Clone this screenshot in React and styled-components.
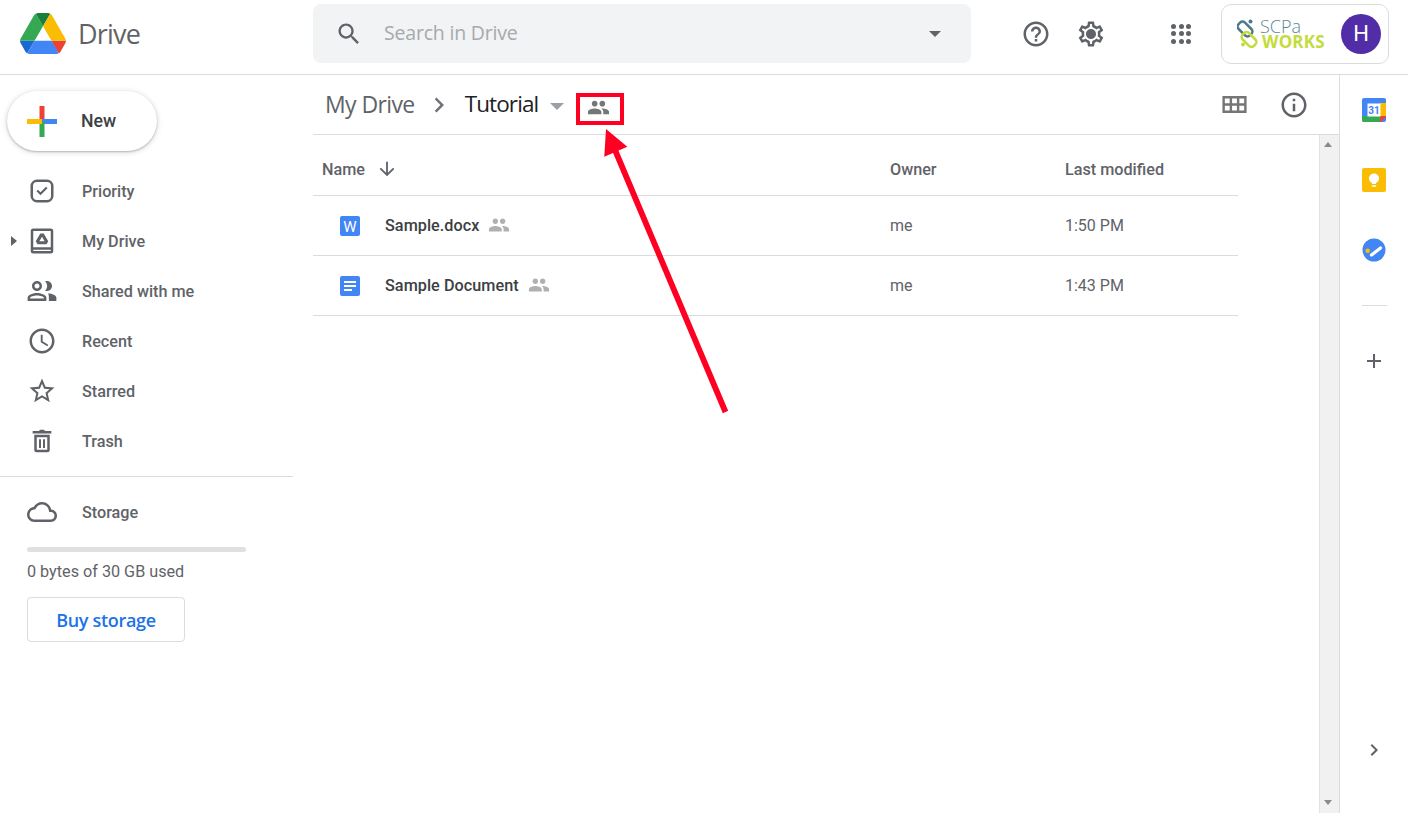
import React from "react";
import styled, { createGlobalStyle } from "styled-components";

const GlobalStyle = createGlobalStyle`
  html, body {
    margin: 0;
    height: 100%;
    background: #fff;
    font-family: Roboto, "Liberation Sans", sans-serif;
    color: #5f6368;
    overflow: hidden;
  }
`;

const paths = {
  search:
    "M15.5 14h-.79l-.28-.27C15.41 12.59 16 11.11 16 9.5 16 5.91 13.09 3 9.5 3S3 5.91 3 9.5 5.91 16 9.5 16c1.61 0 3.09-.59 4.23-1.57l.27.28v.79l5 4.99L20.49 19l-4.99-5zm-6 0C7.01 14 5 11.99 5 9.5S7.01 5 9.5 5 14 7.01 14 9.5 11.99 14 9.5 14z",
  help:
    "M11 18h2v-2h-2v2zm1-16C6.48 2 2 6.48 2 12s4.48 10 10 10 10-4.48 10-10S17.52 2 12 2zm0 18c-4.41 0-8-3.59-8-8s3.59-8 8-8 8 3.59 8 8-3.59 8-8 8zm0-14c-2.21 0-4 1.79-4 4h2c0-1.1.9-2 2-2s2 .9 2 2c0 2-3 1.75-3 5h2c0-2.25 3-2.5 3-5 0-2.21-1.79-4-4-4z",
  settings:
    "M19.43 12.98c.04-.32.07-.64.07-.98 0-.34-.03-.66-.07-.98l2.11-1.65c.19-.15.24-.42.12-.64l-2-3.46c-.09-.16-.26-.25-.44-.25-.06 0-.12.01-.17.03l-2.49 1c-.52-.4-1.08-.73-1.69-.98l-.38-2.65C14.46 2.18 14.25 2 14 2h-4c-.25 0-.46.18-.49.42l-.38 2.65c-.61.25-1.17.59-1.69.98l-2.49-1c-.06-.02-.12-.03-.18-.03-.17 0-.34.09-.43.25l-2 3.46c-.13.22-.07.49.12.64l2.11 1.65c-.04.32-.07.65-.07.98 0 .33.03.66.07.98l-2.11 1.65c-.19.15-.24.42-.12.64l2 3.46c.09.16.26.25.44.25.06 0 .12-.01.17-.03l2.49-1c.52.4 1.08.73 1.69.98l.38 2.65c.03.24.24.42.49.42h4c.25 0 .46-.18.49-.42l.38-2.65c.61-.25 1.17-.59 1.69-.98l2.49 1c.06.02.12.03.18.03.17 0 .34-.09.43-.25l2-3.46c.12-.22.07-.49-.12-.64l-2.11-1.65zm-1.98-1.71c.04.31.05.52.05.73 0 .21-.02.43-.05.73l-.14 1.13.89.7 1.08.84-.7 1.21-1.27-.51-1.04-.42-.9.68c-.43.32-.84.56-1.25.73l-1.06.43-.16 1.13-.2 1.35h-1.4l-.19-1.35-.16-1.13-1.06-.43c-.43-.18-.83-.41-1.23-.71l-.91-.7-1.06.43-1.27.51-.7-1.21 1.08-.84.89-.7-.14-1.13c-.03-.31-.05-.54-.05-.74s.02-.43.05-.73l.14-1.13-.89-.7-1.08-.84.7-1.21 1.27.51 1.04.42.9-.68c.43-.32.84-.56 1.25-.73l1.06-.43.16-1.13.2-1.35h1.39l.19 1.35.16 1.13 1.06.43c.43.18.83.41 1.23.71l.91.7 1.06-.43 1.27-.51.7 1.21-1.07.85-.89.7.14 1.13zM12 8c-2.21 0-4 1.79-4 4s1.79 4 4 4 4-1.79 4-4-1.79-4-4-4z",
  people:
    "M16 11c1.66 0 2.99-1.34 2.99-3S17.66 5 16 5c-1.66 0-3 1.34-3 3s1.34 3 3 3zm-8 0c1.66 0 2.99-1.34 2.99-3S9.66 5 8 5C6.34 5 5 6.34 5 8s1.34 3 3 3zm0 2c-2.33 0-7 1.17-7 3.5V19h14v-2.5c0-2.33-4.67-3.5-7-3.5zm8 0c-.29 0-.62.02-.97.05 1.16.84 1.97 1.97 1.97 3.45V19h6v-2.5c0-2.33-4.67-3.5-7-3.5z",
  shared:
    "M8 4c2.200 0 4 1.800 4 4s-1.800 4-4 4-4-1.800-4-4 1.800-4 4-4zm0 2c-1.100 0-2 .9-2 2s.9 2 2 2 2-.9 2-2-.9-2-2-2zM8 13.500c2.600 0 7.500 1.200 7.500 3.800V20H.5v-2.700c0-2.600 4.900-3.800 7.500-3.800zm0 2c-2.600 0-5.500 1-5.500 1.800V18h11v-.7c0-.8-2.900-1.800-5.500-1.800zM14.500 4.200c.5-.1 1-.2 1.500-.2 2.200 0 4 1.800 4 4s-1.800 4-4 4c-.5 0-1-.1-1.500-.2 1-1 1.600-2.400 1.600-3.800s-.6-2.800-1.600-3.800zM17 13.700c2.900.4 6.500 1.500 6.500 3.600V20h-6v-2.700c0-1.500-.3-2.600-.5-3.600z",
  clock:
    "M11.99 2C6.47 2 2 6.48 2 12s4.47 10 9.99 10C17.52 22 22 17.52 22 12S17.52 2 11.99 2zM12 20c-4.42 0-8-3.58-8-8s3.58-8 8-8 8 3.58 8 8-3.58 8-8 8zm.5-13H11v6l5.25 3.15.75-1.23-4.5-2.67z",
  star:
    "M22 9.24l-7.19-.62L12 2 9.19 8.63 2 9.24l5.46 4.73L5.82 21 12 17.27 18.18 21l-1.63-7.03L22 9.24zM12 15.4l-3.76 2.27 1-4.28-3.32-2.88 4.38-.38L12 6.1l1.71 4.04 4.38.38-3.32 2.88 1 4.28L12 15.4z",
  trash:
    "M4.500 4h5l1-1h3l1 1h5v2h-15zM5.800 7h12.400v12a2 2 0 0 1-2 2H7.800a2 2 0 0 1-2-2V7zm2 2v10h8.400V9H7.800zM9.600 10.500h1.600v7H9.600zM12.800 10.500h1.600v7h-1.600z",
  cloud:
    "M19.35 10.04C18.67 6.59 15.64 4 12 4 9.11 4 6.6 5.64 5.35 8.04 2.34 8.36 0 10.91 0 14c0 3.31 2.69 6 6 6h13c2.76 0 5-2.24 5-5 0-2.64-2.05-4.78-4.65-4.96zM19 18H6c-2.21 0-4-1.79-4-4 0-2.05 1.53-3.76 3.56-3.97l1.07-.11.5-.95C8.08 7.14 9.94 6 12 6c2.62 0 4.88 1.86 5.39 4.43l.3 1.5 1.53.11c1.56.1 2.78 1.41 2.78 2.96 0 1.65-1.35 3-3 3z",
  info:
    "M11 7h2v2h-2zm0 4h2v6h-2zm1-9C6.48 2 2 6.48 2 12s4.48 10 10 10 10-4.48 10-10S17.52 2 12 2zm0 18c-4.41 0-8-3.59-8-8s3.59-8 8-8 8 3.59 8 8-3.59 8-8 8z",
  arrowDown:
    "M20 12l-1.41-1.41L13 16.17V4h-2v12.17l-5.58-5.59L4 12l8 8 8-8z",
  chevron: "M8.59 16.59L13.17 12 8.59 7.41 10 6l6 6-6 6z",
  plus: "M19 13h-6v6h-2v-6H5v-2h6V5h2v6h6v2z",
  grid:
    "M2 5h20v14H2V5zm2 2v4h4V7H4zm6 0v4h4V7h-4zm6 0v4h4V7h-4zM4 13v4h4v-4H4zm6 0v4h4v-4h-4zm6 0v4h4v-4h-4z",
  priority:
    "M8 2.800h8a5.200 5.200 0 0 1 5.200 5.200v8a5.200 5.200 0 0 1-5.200 5.200H8A5.200 5.200 0 0 1 2.800 16V8A5.200 5.200 0 0 1 8 2.800zM8 4.800A3.200 3.200 0 0 0 4.800 8v8A3.200 3.200 0 0 0 8 19.200h8a3.200 3.200 0 0 0 3.200-3.200V8A3.200 3.200 0 0 0 16 4.800H8zM15.200 8.600l1.200 1.200-5.600 5.600-3.200-3.200 1.200-1.200 2 2 4.400-4.400z",
  myDrive:
    "M5 2h14a2 2 0 0 1 2 2v16a2 2 0 0 1-2 2H5a2 2 0 0 1-2-2V4a2 2 0 0 1 2-2zm0 2v13h14V4H5zm0 15v1h14v-1H5zM10.600 6h2.800l3.600 6.200-1.400 2.300H8.400L7 12.200 10.600 6zm1.400 2.500L9.900 12.200h4.200L12 8.500z",
};

const Svg = styled.svg`
  display: block;
  flex: none;
  width: ${(p) => p.$size}px;
  height: ${(p) => p.$size}px;
  fill: ${(p) => p.$color};
`;

const Icon = ({ name, size = 24, color = "#5f6368" }) => (
  <Svg viewBox="0 0 24 24" $size={size} $color={color}>
    <path fillRule="evenodd" d={paths[name]} />
  </Svg>
);

const DriveLogo = () => (
  <svg width="46" height="41" viewBox="0 0 87.3 78">
    <path d="m6.6 66.85 3.85 6.65c.8 1.4 1.95 2.5 3.3 3.3l13.75-23.8h-27.5c0 1.55.4 3.1 1.2 4.5z" fill="#1967d2" />
    <path d="m43.65 25-13.75-23.8c-1.35.8-2.5 1.9-3.3 3.3l-25.4 44a9.06 9.06 0 0 0 -1.2 4.5h27.5z" fill="#34a853" />
    <path d="m73.55 76.8c1.35-.8 2.5-1.9 3.3-3.3l1.6-2.75 7.65-13.25c.8-1.4 1.2-2.95 1.2-4.5h-27.502l5.852 11.5z" fill="#ea4335" />
    <path d="m43.65 25 13.75-23.8c-1.35-.8-2.9-1.2-4.5-1.2h-18.5c-1.6 0-3.15.45-4.5 1.2z" fill="#188038" />
    <path d="m59.8 53h-32.3l-13.75 23.8c1.35.8 2.9 1.2 4.5 1.2h50.8c1.6 0 3.15-.45 4.5-1.2z" fill="#4285f4" />
    <path d="m73.4 26.5-12.7-22c-.8-1.4-1.95-2.5-3.3-3.3l-13.75 23.8 16.15 28h27.45c0-1.55-.4-3.1-1.2-4.5z" fill="#fbbc04" />
  </svg>
);

const PlusLogo = () => (
  <svg width="30" height="31" viewBox="0 0 30 31">
    <rect x="12.500" y="0" width="5" height="15.500" fill="#ea4335" />
    <rect x="15" y="13" width="15" height="5" fill="#4285f4" />
    <rect x="12.500" y="15.500" width="5" height="15.500" fill="#34a853" />
    <rect x="0" y="13" width="15" height="5" fill="#fbbc04" />
  </svg>
);

const WordIcon = () => (
  <svg width="20" height="20" viewBox="0 0 20 20">
    <rect width="20" height="20" rx="2" fill="#4285f4" />
    <text x="10" y="15.500" textAnchor="middle" fontFamily="Roboto, sans-serif" fontSize="15" fill="#fff">
      W
    </text>
  </svg>
);

const DocIcon = () => (
  <svg width="20" height="20" viewBox="0 0 20 20">
    <rect width="20" height="20" rx="2" fill="#4285f4" />
    <path d="M4 5h12v2H4zM4 9h12v2H4zM4 13h8v2H4z" fill="#fff" />
  </svg>
);

const CalendarIcon = () => (
  <svg width="24" height="24" viewBox="0 0 24 24">
    <rect width="24" height="24" rx="2" fill="#4285f4" />
    <path d="M18 5h6v14h-6z" fill="#fbbc04" />
    <path d="M0 18h18v6H2a2 2 0 0 1-2-2z" fill="#34a853" />
    <path d="M18 18h6v1l-5 5h-1z" fill="#ea4335" />
    <rect x="5.500" y="5.500" width="13" height="13" fill="#fff" />
    <text x="12" y="16" textAnchor="middle" fontFamily="Roboto, sans-serif" fontWeight="700" fontSize="10" fill="#4285f4">
      31
    </text>
  </svg>
);

const KeepIcon = () => (
  <svg width="24" height="24" viewBox="0 0 24 24">
    <rect width="24" height="24" rx="2" fill="#fbbc04" />
    <circle cx="12" cy="10.500" r="5" fill="#fff" />
    <path d="M10 13h4v3h-4zM9.800 17.200h4.400v1.600H9.800z" fill="#fff" />
  </svg>
);

const TasksIcon = () => (
  <svg width="24" height="24" viewBox="0 0 24 24">
    <circle cx="12" cy="12" r="11.500" fill="#4285f4" />
    <circle cx="5.700" cy="12.700" r="2.300" fill="#fbbc04" />
    <path d="M9.500 17L18.500 10" stroke="#fff" strokeWidth="3.200" strokeLinecap="round" />
  </svg>
);

const ScpaMark = () => (
  <svg width="21" height="29" viewBox="0 0 21 29" fill="none">
    <rect x="3.500" y="2" width="9" height="16" rx="3.500" transform="rotate(-45 8 10)" stroke="#4d7a8c" strokeWidth="2.500" />
    <rect x="7.500" y="12.500" width="9" height="16" rx="3.500" transform="rotate(-45 12 20.500)" stroke="#c3dc3c" strokeWidth="2.500" />
    <circle cx="13.500" cy="2.500" r="2" fill="#4d7a8c" />
    <circle cx="6" cy="25.500" r="2" fill="#c3dc3c" />
  </svg>
);

const Page = styled.div`
  position: relative;
  display: flex;
  flex-direction: column;
  height: 813px;
  overflow: hidden;
`;

const Header = styled.header`
  flex: none;
  height: 74px;
  display: flex;
  align-items: center;
  border-bottom: 1px solid #dadce0;
`;

const Brand = styled.div`
  width: 313px;
  flex: none;
  display: flex;
  align-items: center;
  gap: 12px;
  padding-left: 20px;
  box-sizing: border-box;
  margin-top: -7px;
`;

const BrandName = styled.span`
  font-family: "Open Sans", sans-serif;
  font-size: 27px;
  letter-spacing: -0.8px;
  color: #5f6368;
`;

const Search = styled.div`
  width: 658px;
  height: 59px;
  flex: none;
  margin-top: -7px;
  display: flex;
  align-items: center;
  padding: 0 30px 0 22px;
  box-sizing: border-box;
  background: #f1f3f4;
  border-radius: 8px;
`;

const SearchText = styled.span`
  flex: 1;
  margin: 0 0 2px 21px;
  font-family: "Open Sans", sans-serif;
  font-size: 19.500px;
  letter-spacing: -0.2px;
  color: #a6a9ad;
`;

const SmallCaret = styled.span`
  width: 0;
  height: 0;
  border-left: ${(p) => p.$size}px solid transparent;
  border-right: ${(p) => p.$size}px solid transparent;
  border-top: ${(p) => p.$size}px solid ${(p) => p.$color};
`;

const HeaderTools = styled.div`
  display: flex;
  align-items: center;
  margin-top: -7px;
  padding-left: 50px;
`;

const ToolSlot = styled.div`
  width: ${(p) => p.$width}px;
  display: flex;
  margin-top: 1px;
`;

const Dots = styled.div`
  display: grid;
  grid-template-columns: repeat(3, 5px);
  gap: 2.500px;
`;

const Dot = styled.span`
  width: 5px;
  height: 5px;
  border-radius: 50%;
  background: #5f6368;
`;

const Account = styled.div`
  width: 168px;
  height: 60px;
  margin-left: 30px;
  display: flex;
  align-items: center;
  box-sizing: border-box;
  padding: 0 7px 0 15px;
  border: 1px solid #dadce0;
  border-radius: 10px;
`;

const OrgLogo = styled.div`
  flex: 1;
  display: flex;
  align-items: center;
`;

const OrgText = styled.div`
  display: flex;
  flex-direction: column;
  margin-left: 2px;
  line-height: 15px;
`;

const OrgTop = styled.span`
  font-family: "Open Sans", sans-serif;
  font-size: 18px;
  font-weight: 300;
  color: #5c8797;
`;

const OrgBottom = styled.span`
  padding-left: 2px;
  font-family: "Open Sans", sans-serif;
  font-size: 17px;
  font-weight: 700;
  letter-spacing: 0.2px;
  color: #c3dc3c;
`;

const Avatar = styled.div`
  width: 40px;
  height: 40px;
  border-radius: 50%;
  background: #512da8;
  color: #fff;
  font-size: 22px;
  display: flex;
  align-items: center;
  justify-content: center;
`;

const Body = styled.div`
  flex: 1;
  min-height: 0;
  display: flex;
`;

const Sidebar = styled.aside`
  width: 293px;
  flex: none;
  margin-right: 20px;
`;

const NewButton = styled.div`
  width: 150px;
  height: 60px;
  margin: 16px 0 15px 7px;
  box-sizing: border-box;
  padding-left: 20px;
  display: flex;
  align-items: center;
  gap: 24px;
  border-radius: 30px;
  background: #fff;
  box-shadow: 0 1px 2px rgba(60, 64, 67, 0.3), 0 1px 5px 1px rgba(60, 64, 67, 0.15);
  font-size: 17.700px;
  font-weight: 500;
  color: #3c4043;
`;

const NavList = styled.nav`
  display: flex;
  flex-direction: column;
`;

const NavItem = styled.div`
  height: 50px;
  display: flex;
  align-items: center;
  font-size: 16.200px;
  font-weight: 500;
  color: #5f6368;
`;

const CaretSlot = styled.div`
  width: 27px;
  flex: none;
  display: flex;
  padding-left: 11px;
  box-sizing: border-box;
`;

const RightCaret = styled.span`
  width: 0;
  height: 0;
  border-top: 5px solid transparent;
  border-bottom: 5px solid transparent;
  border-left: 6px solid #5f6368;
`;

const NavLabel = styled.span`
  margin-left: 25px;
`;

const StorageBlock = styled.div`
  margin-top: 10px;
  border-top: 1px solid #dadce0;
  padding-top: 10px;
`;

const StorageMeter = styled.div`
  width: 219px;
  height: 5px;
  margin: 10px 0 0 27px;
  border-radius: 3px;
  background: #e0e0e0;
`;

const StorageText = styled.div`
  margin: 11px 0 0 27px;
  font-size: 16.200px;
  line-height: 18px;
  color: #5f6368;
`;

const BuyButton = styled.div`
  width: 158px;
  height: 45px;
  margin: 16px 0 0 27px;
  box-sizing: border-box;
  display: flex;
  align-items: center;
  justify-content: center;
  border: 1px solid #dadce0;
  border-radius: 4px;
  font-family: "Open Sans", sans-serif;
  font-size: 18px;
  font-weight: 600;
  letter-spacing: -0.3px;
  color: #1a73e8;
`;

const Main = styled.main`
  flex: 1;
  min-width: 0;
  display: flex;
  flex-direction: column;
`;

const Crumbs = styled.div`
  height: 59px;
  flex: none;
  display: flex;
  align-items: center;
  border-bottom: 1px solid #dadce0;
  padding-left: 12px;
`;

const CrumbParent = styled.span`
  padding-bottom: 2px;
  font-family: "Open Sans", sans-serif;
  font-size: 23px;
  letter-spacing: -0.6px;
  color: #5f6368;
`;

const CrumbCurrent = styled.span`
  padding-bottom: 2px;
  font-family: "Open Sans", sans-serif;
  font-size: 22.500px;
  letter-spacing: -0.9px;
  color: #202124;
`;

const CrumbSep = styled.div`
  margin: 0 11px 0 9px;
`;

const CrumbCaret = styled.div`
  margin: 3px 0 0 12px;
  width: 37px;
`;

const CrumbShare = styled.div`
  margin-top: 5px;
`;

const ViewTools = styled.div`
  margin-left: auto;
  display: flex;
  align-items: center;
  gap: 30px;
  padding-right: 30px;
`;

const ListArea = styled.div`
  flex: 1;
  min-height: 0;
  display: flex;
`;

const FileTable = styled.div`
  flex: 1;
  padding-right: 81px;
`;

const Row = styled.div`
  height: 59px;
  display: grid;
  grid-template-columns: 577px 175px 1fr;
  align-items: center;
  border-bottom: 1px solid #dadce0;
`;

const HeadRow = styled(Row)`
  height: 52px;
  padding-top: 8px;
`;

const HeadCell = styled.div`
  display: flex;
  align-items: center;
  gap: 11px;
  padding-left: ${(p) => p.$inset}px;
  font-size: 16.200px;
  font-weight: 500;
  color: #5f6368;
`;

const NameCell = styled.div`
  display: flex;
  align-items: center;
  padding-left: 27px;
`;

const FileName = styled.span`
  margin: 0 9px 0 25px;
  font-size: 16.200px;
  letter-spacing: 0.05px;
  font-weight: 500;
  color: #3c4043;
`;

const RowShare = styled.div`
  margin-top: -2px;
`;

const MetaCell = styled.div`
  font-size: 16px;
  color: #5f6368;
`;

const Scrollbar = styled.div`
  width: 20px;
  flex: none;
  box-sizing: border-box;
  display: flex;
  flex-direction: column;
  align-items: center;
  justify-content: space-between;
  padding: 7px 3px 8px 0;
  background: #f1f1f1;
  border-left: 1px solid #e2e2e2;
`;

const ScrollArrow = styled.span`
  width: 0;
  height: 0;
  border-left: 4.500px solid transparent;
  border-right: 4.500px solid transparent;
  border-${(p) => (p.$up ? "bottom" : "top")}: 5px solid #8a8a8a;
`;

const Rail = styled.aside`
  width: 69px;
  flex: none;
  box-sizing: border-box;
  border-left: 1px solid #dadce0;
  display: flex;
  flex-direction: column;
  align-items: center;
  padding-top: 23px;
`;

const RailApp = styled.div`
  height: 24px;
  margin-bottom: 46px;
`;

const RailRule = styled.div`
  width: 25px;
  height: 1px;
  margin: -3px 0 43px;
  background: #dadce0;
`;

const RailFoot = styled.div`
  margin-top: auto;
  margin-bottom: 51px;
`;

const RedBox = styled.div`
  position: absolute;
  left: 576px;
  top: 93px;
  width: 48px;
  height: 32px;
  box-sizing: border-box;
  border: 4px solid #ff0022;
`;

const Annotation = styled.svg`
  position: absolute;
  left: 590px;
  top: 120px;
  width: 150px;
  height: 300px;
`;

const navItems = [
  { icon: "priority", label: "Priority" },
  { icon: "myDrive", label: "My Drive", expandable: true },
  { icon: "shared", label: "Shared with me" },
  { icon: "clock", label: "Recent" },
  { icon: "star", label: "Starred" },
  { icon: "trash", label: "Trash" },
];

const files = [
  { name: "Sample.docx", modified: "1:50 PM", icon: <WordIcon /> },
  { name: "Sample Document", modified: "1:43 PM", icon: <DocIcon /> },
];

export default function App() {
  return (
    <Page>
      <GlobalStyle />
      <Header>
        <Brand>
          <DriveLogo />
          <BrandName>Drive</BrandName>
        </Brand>
        <Search>
          <Icon name="search" size={28} />
          <SearchText>Search in Drive</SearchText>
          <SmallCaret $size={6} $color="#5f6368" />
        </Search>
        <HeaderTools>
          <ToolSlot $width={55}>
            <Icon name="help" size={30} />
          </ToolSlot>
          <ToolSlot $width={95}>
            <Icon name="settings" size={30} />
          </ToolSlot>
          <Dots>
            {Array.from({ length: 9 }, (_, i) => (
              <Dot key={i} />
            ))}
          </Dots>
          <Account>
            <OrgLogo>
              <ScpaMark />
              <OrgText>
                <OrgTop>SCPa</OrgTop>
                <OrgBottom>WORKS</OrgBottom>
              </OrgText>
            </OrgLogo>
            <Avatar>H</Avatar>
          </Account>
        </HeaderTools>
      </Header>
      <Body>
        <Sidebar>
          <NewButton>
            <PlusLogo />
            New
          </NewButton>
          <NavList>
            {navItems.map((item) => (
              <NavItem key={item.label}>
                <CaretSlot>{item.expandable && <RightCaret />}</CaretSlot>
                <Icon name={item.icon} size={30} />
                <NavLabel>{item.label}</NavLabel>
              </NavItem>
            ))}
          </NavList>
          <StorageBlock>
            <NavItem>
              <CaretSlot />
              <Icon name="cloud" size={30} />
              <NavLabel>Storage</NavLabel>
            </NavItem>
            <StorageMeter />
            <StorageText>0 bytes of 30 GB used</StorageText>
            <BuyButton>Buy storage</BuyButton>
          </StorageBlock>
        </Sidebar>
        <Main>
          <Crumbs>
            <CrumbParent>My Drive</CrumbParent>
            <CrumbSep>
              <Icon name="chevron" size={30} color="#6f7377" />
            </CrumbSep>
            <CrumbCurrent>Tutorial</CrumbCurrent>
            <CrumbCaret>
              <SmallCaret $size={7} $color="#9aa0a6" as="div" />
            </CrumbCaret>
            <CrumbShare>
              <Icon name="people" size={23} color="#757575" />
            </CrumbShare>
            <ViewTools>
              <Icon name="grid" size={29} color="#757575" />
              <Icon name="info" size={30} color="#5f6368" />
            </ViewTools>
          </Crumbs>
          <ListArea>
            <FileTable>
              <HeadRow>
                <HeadCell $inset={9}>
                  Name
                  <Icon name="arrowDown" size={22} />
                </HeadCell>
                <HeadCell $inset={0}>Owner</HeadCell>
                <HeadCell $inset={0}>Last modified</HeadCell>
              </HeadRow>
              {files.map((file) => (
                <Row key={file.name}>
                  <NameCell>
                    {file.icon}
                    <FileName>{file.name}</FileName>
                    <RowShare>
                      <Icon name="people" size={22} color="#b0b0b0" />
                    </RowShare>
                  </NameCell>
                  <MetaCell>me</MetaCell>
                  <MetaCell>{file.modified}</MetaCell>
                </Row>
              ))}
            </FileTable>
            <Scrollbar>
              <ScrollArrow $up />
              <ScrollArrow />
            </Scrollbar>
          </ListArea>
        </Main>
        <Rail>
          <RailApp>
            <CalendarIcon />
          </RailApp>
          <RailApp>
            <KeepIcon />
          </RailApp>
          <RailApp>
            <TasksIcon />
          </RailApp>
          <RailRule />
          <Icon name="plus" size={24} />
          <RailFoot>
            <Icon name="chevron" size={24} />
          </RailFoot>
        </Rail>
      </Body>
      <RedBox />
      <Annotation viewBox="590 120 150 300">
        <path d="M725.500 412L615 150" stroke="#ff0022" strokeWidth="5.800" fill="none" />
        <path d="M606 129L604.300 156.700L627.300 146.700Z" fill="#ff0022" />
      </Annotation>
    </Page>
  );
}
